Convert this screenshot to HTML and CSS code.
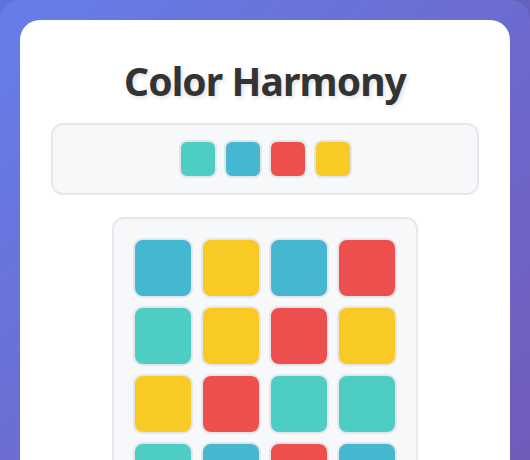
FILE: index.html
```html
<!DOCTYPE html>
<html lang="en">
<head>
<meta charset="utf-8">
<title>Color Harmony</title>
<link rel="stylesheet" href="styles.css">
</head>
<body>
<div class="frame">
  <main class="card">
    <h1 class="title">Color Harmony</h1>
    <section class="palette">
      <div class="swatch teal"></div>
      <div class="swatch blue"></div>
      <div class="swatch red"></div>
      <div class="swatch yellow"></div>
    </section>
    <section class="board">
      <div class="tile blue"></div>
      <div class="tile yellow"></div>
      <div class="tile blue"></div>
      <div class="tile red"></div>
      <div class="tile teal"></div>
      <div class="tile yellow"></div>
      <div class="tile red"></div>
      <div class="tile yellow"></div>
      <div class="tile yellow"></div>
      <div class="tile red"></div>
      <div class="tile teal"></div>
      <div class="tile teal"></div>
      <div class="tile teal"></div>
      <div class="tile blue"></div>
      <div class="tile red"></div>
      <div class="tile blue"></div>
    </section>
  </main>
</div>
</body>
</html>
```
FILE: styles.css
```css
html {
  background: linear-gradient(135deg, #5f74dc 0%, #6a4f9c 100%);
  min-height: 100%;
}
body {
  margin: 0;
  font-family: "Noto Sans", "Open Sans", sans-serif;
}
.frame {
  min-height: 100vh;
  box-sizing: border-box;
  padding: 20px;
  border-radius: 20px;
  background: linear-gradient(135deg, #667eea 0%, #764ba2 130%);
}
.card {
  background: #ffffff;
  border-radius: 20px;
  padding: 34px 31px 40px;
}
.title {
  margin: 0 0 16px;
  text-align: center;
  font-size: 39px;
  letter-spacing: -0.9px;
  font-weight: 700;
  color: #333333;
  text-shadow: 2px 2px 4px rgba(0, 0, 0, 0.12);
}
.palette {
  display: flex;
  justify-content: center;
  gap: 7px;
  padding: 15px;
  background: #f7f8fa;
  border: 2px solid #e6e8ec;
  border-radius: 12px;
  margin-bottom: 22px;
}
.swatch {
  width: 34px;
  height: 34px;
  border: 2px solid #e2e5ea;
  border-radius: 8px;
}
.board {
  width: max-content;
  margin: 0 auto;
  display: grid;
  grid-template-columns: repeat(4, 60px);
  gap: 8px;
  padding: 19px;
  background: #f7f8fa;
  border: 2px solid #e6e8ec;
  border-radius: 12px;
}
.tile {
  width: 56px;
  height: 56px;
  border: 2px solid #e2e5ea;
  border-radius: 10px;
}
.teal { background: #4ecdc4; }
.blue { background: #45b7d1; }
.red { background: #ec4f4d; }
.yellow { background: #f9ca24; }
```
